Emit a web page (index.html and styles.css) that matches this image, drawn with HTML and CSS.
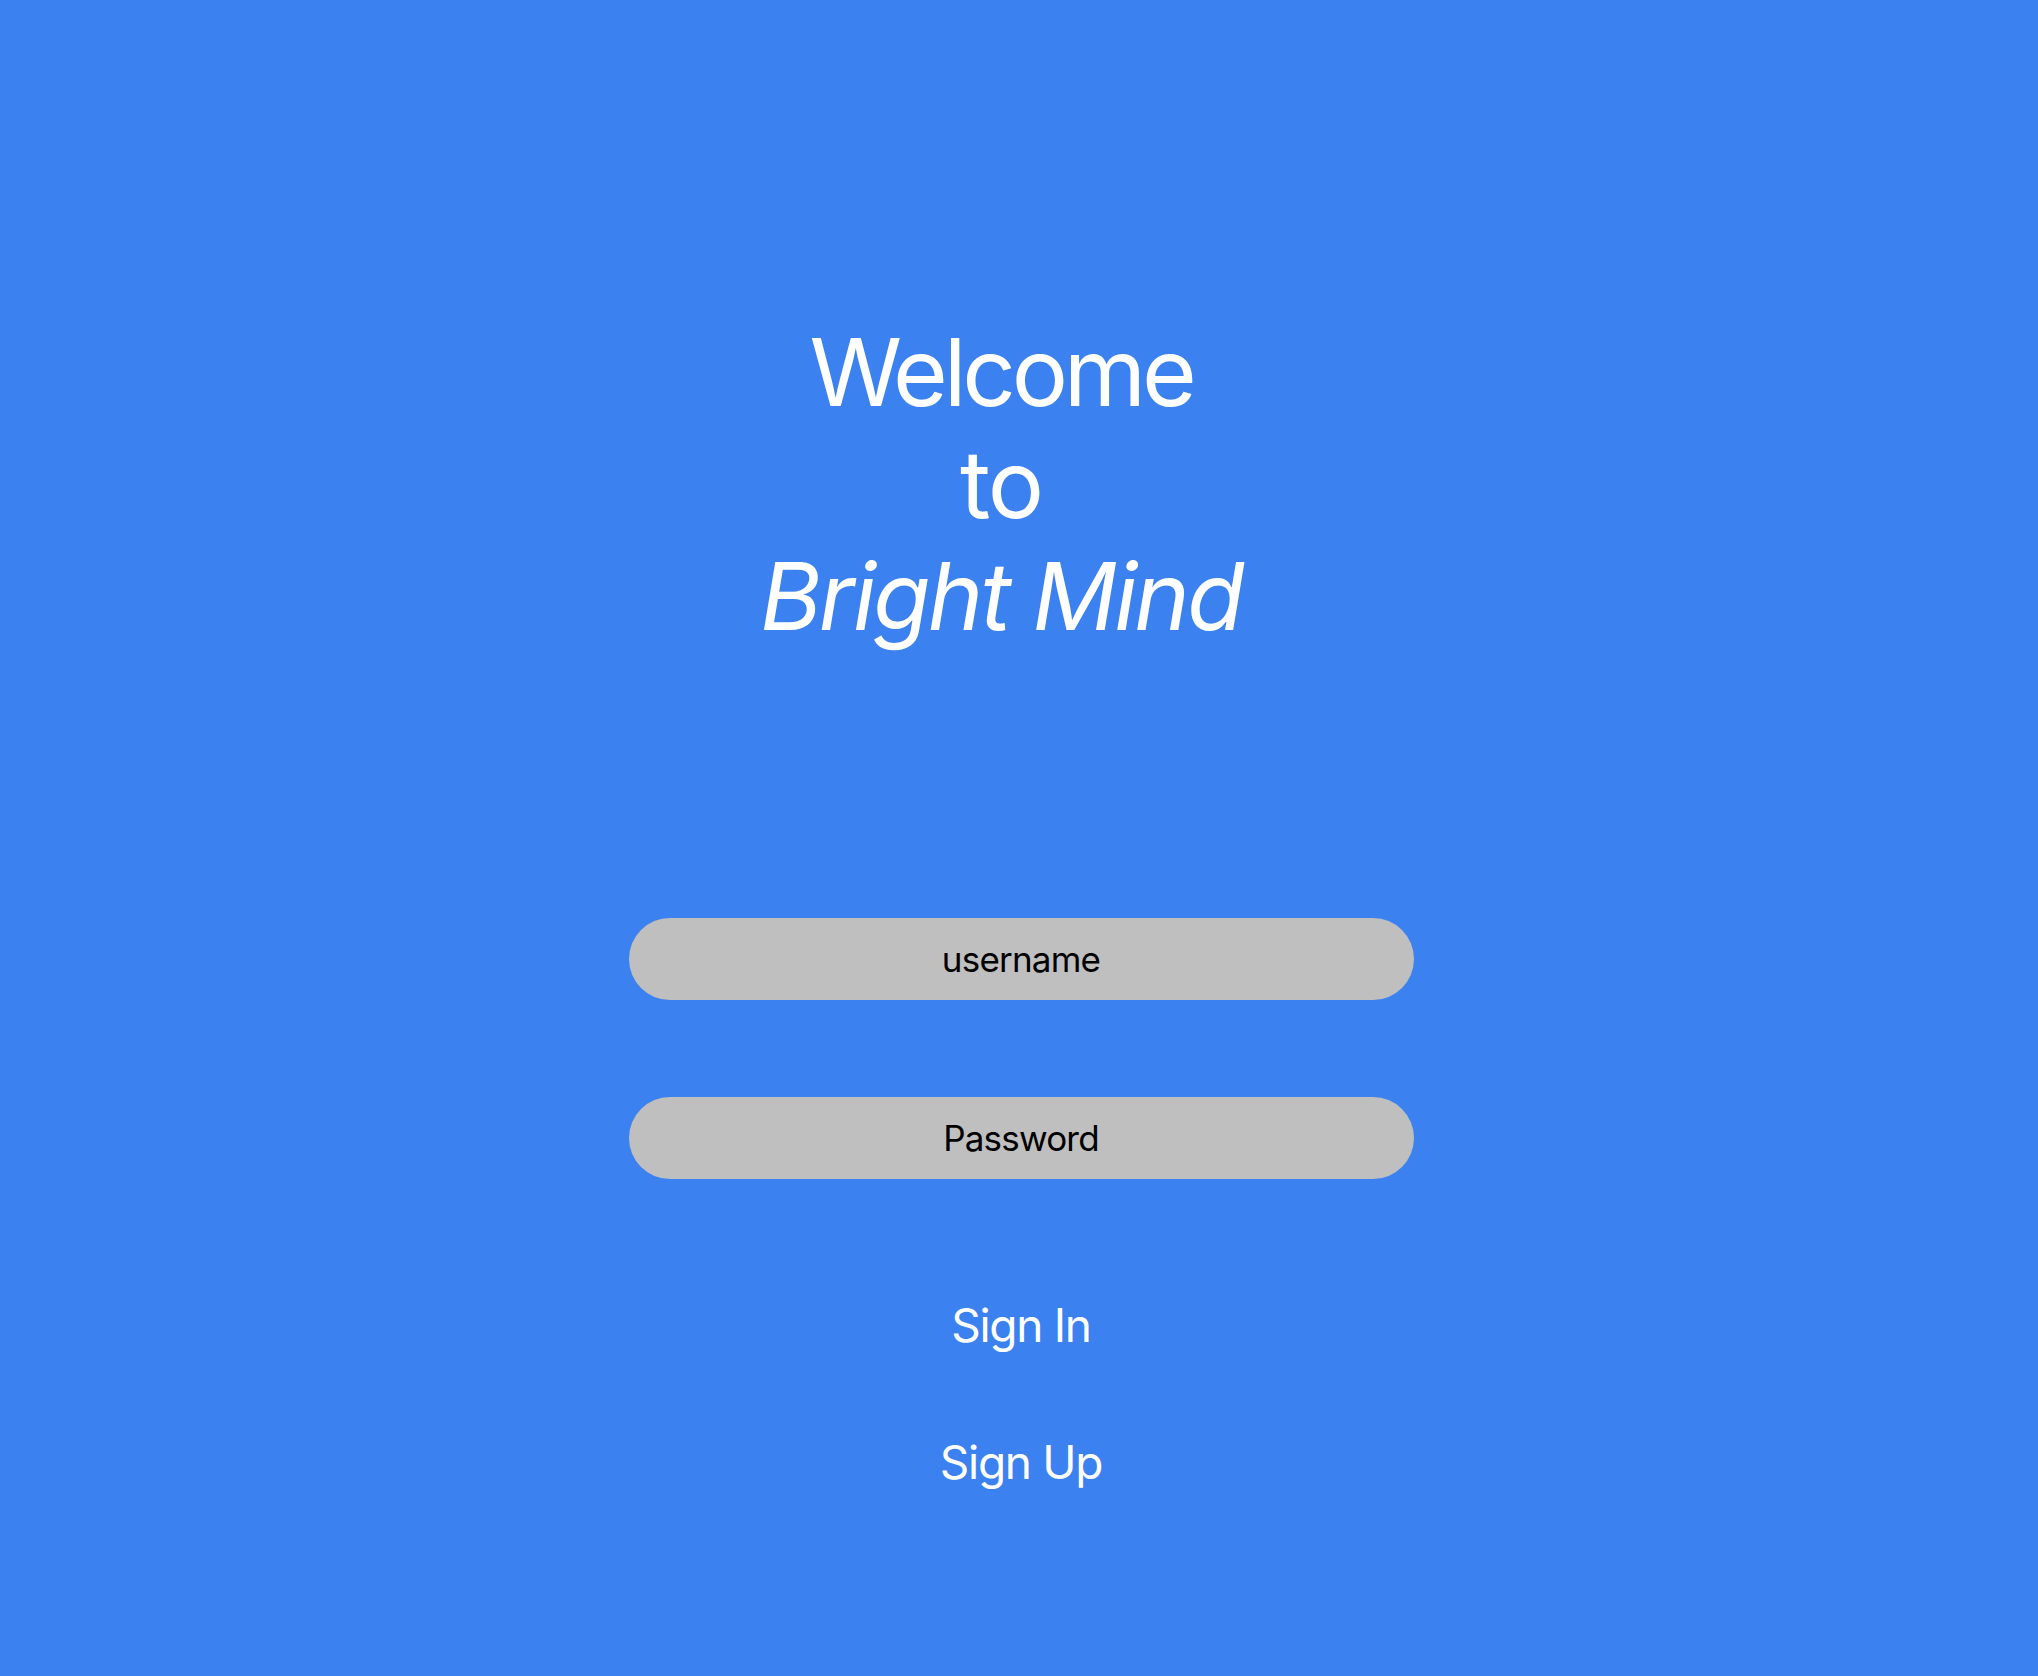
FILE: index.html
```html
<!DOCTYPE html>
<html lang="en">
<head>
<meta charset="utf-8">
<title>Bright Mind</title>
<link rel="stylesheet" href="styles.css">
</head>
<body>
<main class="screen">
  <h1 class="title">
    <span class="title-line welcome">Welcome</span>
    <span class="title-line">to</span>
    <span class="title-line brand">Bright Mind</span>
  </h1>
  <form class="login">
    <input class="field" type="text" placeholder="username">
    <input class="field field-second" type="password" placeholder="Password">
    <button class="link-btn" type="button">Sign In</button>
    <button class="link-btn link-second" type="button">Sign Up</button>
  </form>
</main>
</body>
</html>
```
FILE: styles.css
```css
html, body {
  margin: 0;
  padding: 0;
}
body {
  background: #3b82f0;
  font-family: Inter, "Noto Sans", "Liberation Sans", sans-serif;
  height: 1676px;
  overflow: hidden;
}
.screen {
  display: flex;
  flex-direction: column;
  align-items: center;
  padding-top: 316px;
}
.title {
  margin: 0 36px 0 0;
  display: flex;
  flex-direction: column;
  align-items: center;
  color: #ffffff;
  font-weight: 400;
  font-size: 94px;
  line-height: 112px;
  letter-spacing: -2px;
}
.welcome {
  letter-spacing: -4.2px;
}
.brand {
  font-style: italic;
  letter-spacing: -2.8px;
}
.login {
  margin: 266px 0 0 4px;
  display: flex;
  flex-direction: column;
  align-items: center;
}
.field {
  box-sizing: border-box;
  width: 785px;
  height: 82px;
  border: none;
  border-radius: 41px;
  background: #bfbfbf;
  font-family: inherit;
  font-size: 35px;
  letter-spacing: -0.8px;
  text-align: center;
  color: #000;
  outline: none;
  padding: 0;
}
.field::placeholder {
  color: #000;
  opacity: 1;
}
.field-second {
  margin-top: 97px;
}
.link-btn {
  margin-top: 118px;
  background: none;
  border: none;
  padding: 0;
  color: #ffffff;
  font-family: inherit;
  font-size: 46px;
  line-height: 56px;
  letter-spacing: -1.3px;
  cursor: pointer;
}
.link-second {
  margin-top: 81px;
}
```
